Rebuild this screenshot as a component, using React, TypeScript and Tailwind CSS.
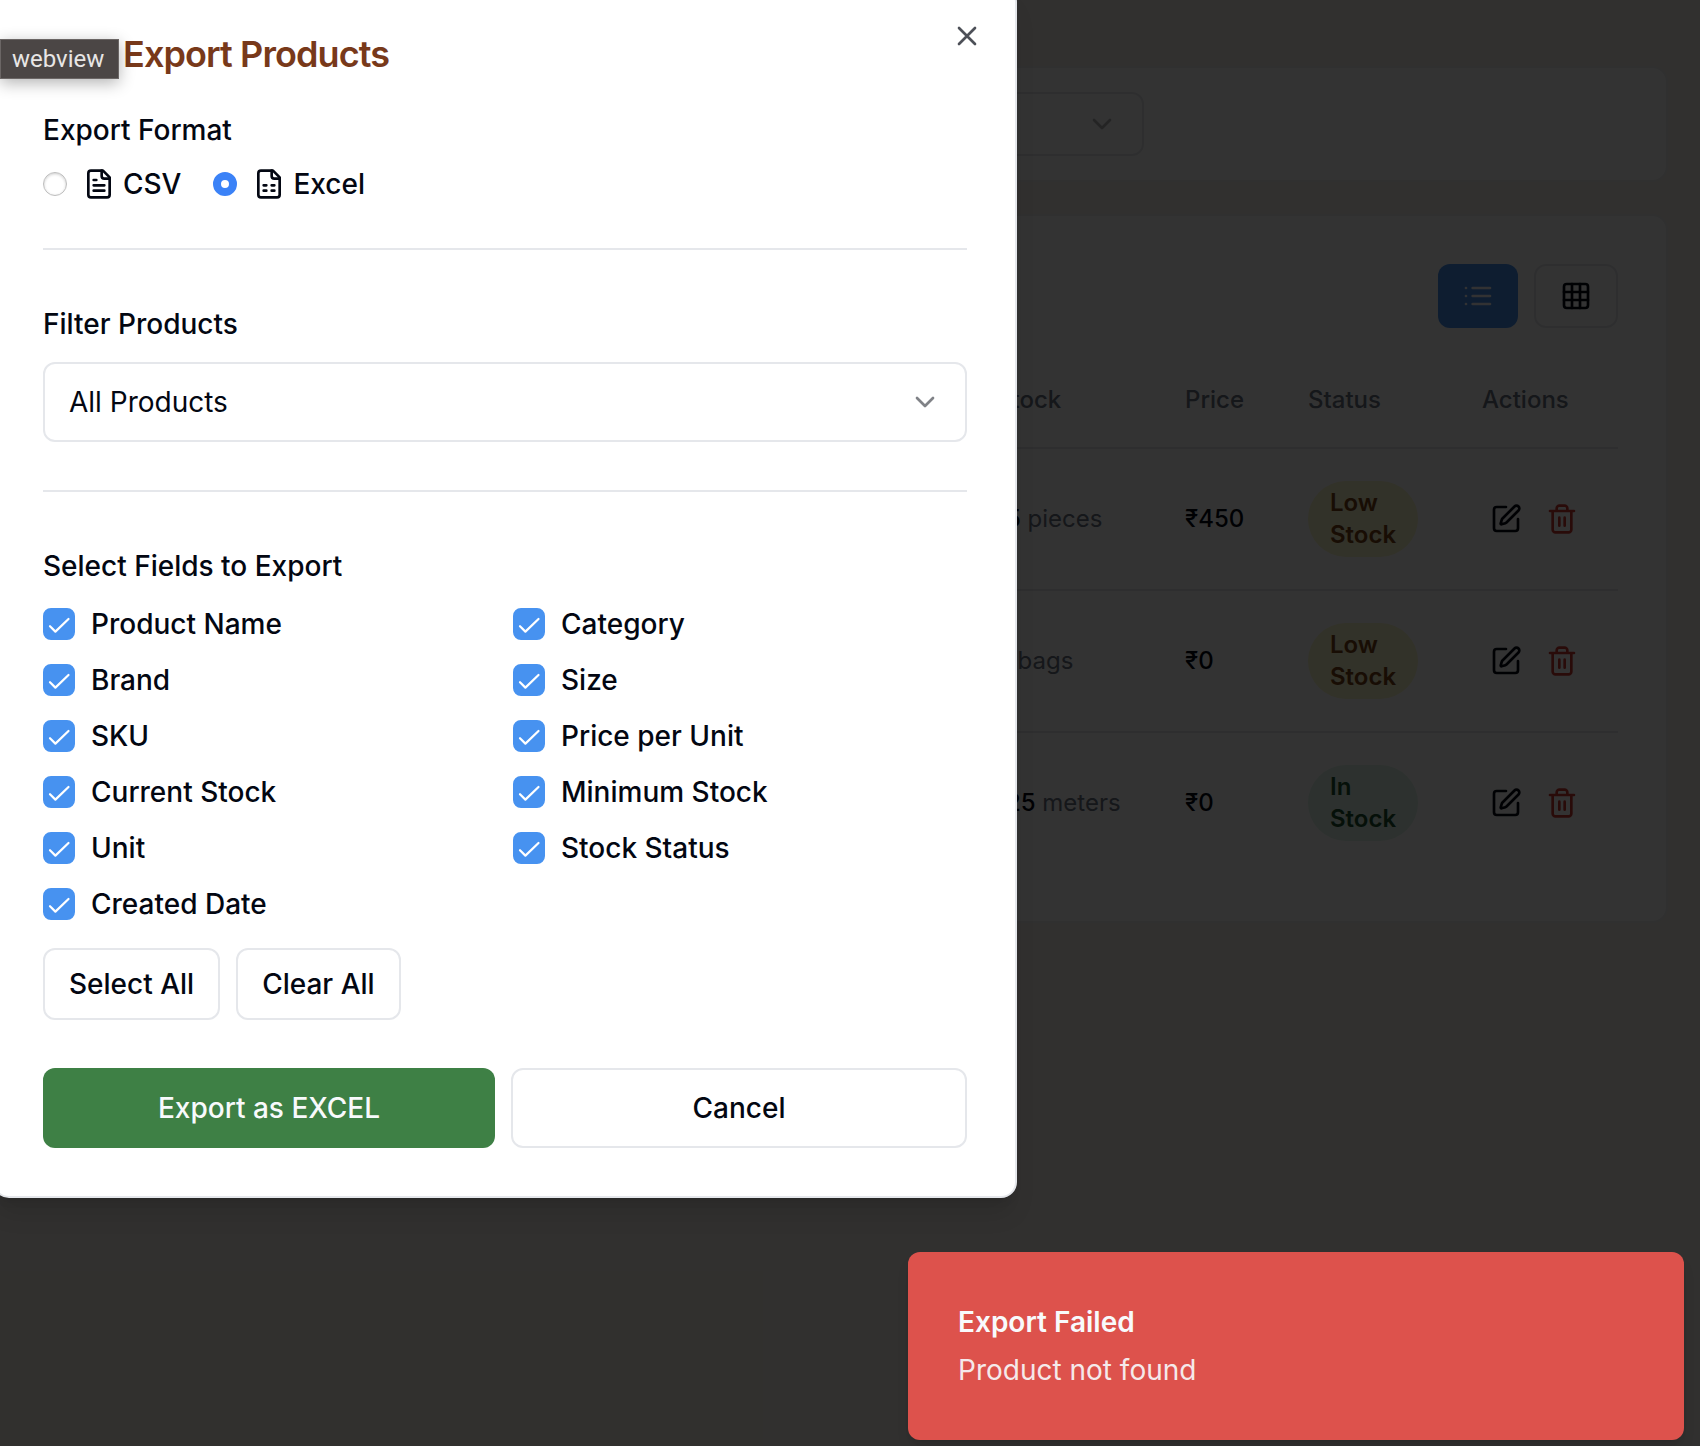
import { useState, type ReactNode } from "react";

const fields = [
  "Product Name",
  "Category",
  "Brand",
  "Size",
  "SKU",
  "Price per Unit",
  "Current Stock",
  "Minimum Stock",
  "Unit",
  "Stock Status",
  "Created Date",
];

const rows = [
  { amount: "15", unit: "pieces", price: "₹450", status: "Low Stock" },
  { amount: "5", unit: "bags", price: "₹0", status: "Low Stock" },
  { amount: "125", unit: "meters", price: "₹0", status: "In Stock" },
];

function Icon({ children, className = "" }: { children: ReactNode; className?: string }) {
  return (
    <svg
      viewBox="0 0 24 24"
      fill="none"
      stroke="currentColor"
      strokeWidth="2"
      strokeLinecap="round"
      strokeLinejoin="round"
      aria-hidden="true"
      className={`size-8 shrink-0 ${className}`}
    >
      {children}
    </svg>
  );
}

function Chevron({ className }: { className: string }) {
  return (
    <Icon className={`pointer-events-none absolute right-[26px] ${className}`}>
      <path d="m6 9 6 6 6-6" />
    </Icon>
  );
}

function FormatOption({
  label,
  checked,
  onChange,
  children,
}: {
  label: string;
  checked: boolean;
  onChange: () => void;
  children: ReactNode;
}) {
  return (
    <label className="flex items-center gap-4">
      <input
        type="radio"
        name="format"
        checked={checked}
        onChange={onChange}
        className="size-6 appearance-none rounded-full border border-[#bdbdbd] bg-white shadow-[inset_0_1px_3px_rgba(0,0,0,0.2)] checked:border-[8px] checked:border-[#3b82f7] checked:shadow-none"
      />
      <span className="flex items-center gap-2">
        <Icon>
          <path d="M15 2H6a2 2 0 0 0-2 2v16a2 2 0 0 0 2 2h12a2 2 0 0 0 2-2V7Z" />
          <path d="M14 2v4a2 2 0 0 0 2 2h4" />
          {children}
        </Icon>
        {label}
      </span>
    </label>
  );
}

function ProductsPage() {
  return (
    <main className="flex min-h-screen flex-col gap-8 bg-[#f5f0e8] px-8 pt-[66px]">
      <section className="rounded-2xl border-2 border-gray-200/70 bg-white p-6">
        <div className="relative ml-auto mr-[498px] flex w-[400px] items-center">
          <select
            aria-label="Category"
            className="h-16 w-full appearance-none rounded-xl border-2 border-gray-200 bg-white px-6"
          />
          <Chevron className="opacity-30" />
        </div>
      </section>
      <section className="flex flex-col gap-6 rounded-2xl border-2 border-gray-200/70 bg-white p-12">
        <div className="flex justify-end gap-4">
          <button
            aria-label="List view"
            className="flex h-16 items-center rounded-xl bg-[#4792f0] px-6 text-slate-50"
          >
            <Icon>
              <path d="M8 6h13M8 12h13M8 18h13M3 6h.01M3 12h.01M3 18h.01" />
            </Icon>
          </button>
          <button
            aria-label="Grid view"
            className="flex h-16 items-center rounded-xl border-2 border-gray-200 bg-white px-6"
          >
            <Icon>
              <rect width="18" height="18" x="3" y="3" rx="2" />
              <path d="M3 9h18M3 15h18M9 3v18M15 3v18" />
            </Icon>
          </button>
        </div>
        <table className="w-full table-fixed text-left text-2xl">
          <colgroup>
            <col />
            <col className="w-[189px]" />
            <col className="w-[123px]" />
            <col className="w-[174px]" />
            <col className="w-[168px]" />
          </colgroup>
          <thead>
            <tr className="border-b-2 border-gray-200 text-gray-500">
              <td />
              <th className="h-24 px-8 font-medium">Stock</th>
              <th className="px-8 font-medium">Price</th>
              <th className="px-8 font-medium">Status</th>
              <th className="px-8 font-medium">Actions</th>
            </tr>
          </thead>
          <tbody>
            {rows.map((row) => (
              <tr key={row.unit} className="border-b-2 border-gray-200 last:border-0">
                <td />
                <td className="whitespace-nowrap px-8">
                  <span className="font-medium">{row.amount}</span>{" "}
                  <span className="text-gray-500">{row.unit}</span>
                </td>
                <td className="px-8 font-medium">{row.price}</td>
                <td className="p-8">
                  <div
                    className={
                      row.status === "In Stock"
                        ? "rounded-full border-2 border-transparent bg-[#dff6e9] px-5 py-1 font-semibold text-[#1d5230]"
                        : "rounded-full border-2 border-transparent bg-[#fbf7cb] px-5 py-1 font-semibold text-[#774416]"
                    }
                  >
                    {row.status}
                  </div>
                </td>
                <td className="px-8">
                  <div className="flex gap-2">
                    <button aria-label="Edit" className="p-2">
                      <Icon>
                        <path d="M12 3H5a2 2 0 0 0-2 2v14a2 2 0 0 0 2 2h14a2 2 0 0 0 2-2v-7" />
                        <path d="M18.375 2.625a1 1 0 0 1 3 3l-9.013 9.014a2 2 0 0 1-.853.505l-2.873.84a.5.5 0 0 1-.62-.62l.84-2.873a2 2 0 0 1 .506-.852z" />
                      </Icon>
                    </button>
                    <button aria-label="Delete" className="p-2 text-[#cb3a31]">
                      <Icon>
                        <path d="M3 6h18M19 6v14c0 1-1 2-2 2H7c-1 0-2-1-2-2V6M8 6V4c0-1 1-2 2-2h4c1 0 2 1 2 2v2M10 11v6M14 11v6" />
                      </Icon>
                    </button>
                  </div>
                </td>
              </tr>
            ))}
          </tbody>
        </table>
      </section>
    </main>
  );
}

export default function App() {
  const [format, setFormat] = useState("Excel");
  const [selected, setSelected] = useState<string[]>(fields);

  const toggle = (field: string) =>
    setSelected((current) =>
      current.includes(field) ? current.filter((f) => f !== field) : [...current, field],
    );

  return (
    <div className="relative min-h-screen overflow-hidden font-['Inter',sans-serif] text-[28px] leading-10 text-gray-950">
      <ProductsPage />
      <div className="absolute inset-0 bg-black/80" />

      <div
        role="dialog"
        aria-labelledby="dialog-title"
        className="absolute -left-[7px] -top-[14px] flex w-[1024px] flex-col rounded-2xl border-2 border-gray-200 bg-white p-12 font-medium shadow-xl"
      >
        <h2
          id="dialog-title"
          className="pl-20 text-4xl/9 font-semibold tracking-tight text-[#78391a]"
        >
          Export Products
        </h2>
        <button aria-label="Close" className="absolute right-8 top-8 opacity-70">
          <Icon>
            <path d="M18 6 6 18M6 6l12 12" />
          </Icon>
        </button>

        <fieldset className="mt-10">
          <legend className="leading-9">Export Format</legend>
          <div className="mt-4 flex gap-8">
            <FormatOption label="CSV" checked={format === "CSV"} onChange={() => setFormat("CSV")}>
              <path d="M10 9H8M16 13H8M16 17H8" />
            </FormatOption>
            <FormatOption
              label="Excel"
              checked={format === "Excel"}
              onChange={() => setFormat("Excel")}
            >
              <path d="M8 13h2M14 13h2M8 17h2M14 17h2" />
            </FormatOption>
          </div>
        </fieldset>

        <hr className="mt-11 border-t-2 border-gray-200" />

        <label htmlFor="filter" className="mt-14 leading-9">
          Filter Products
        </label>
        <div className="relative mt-5 flex items-center">
          <select
            id="filter"
            className="h-20 w-full appearance-none rounded-xl border-2 border-gray-200 bg-white px-6 font-normal"
          >
            <option>All Products</option>
          </select>
          <Chevron className="opacity-50" />
        </div>

        <hr className="mt-12 border-t-2 border-gray-200" />

        <fieldset className="mt-14">
          <legend className="leading-9">Select Fields to Export</legend>
          <div className="mt-5 grid grid-cols-2 gap-x-4 gap-y-4">
            {fields.map((field) => (
              <label key={field} className="flex items-center gap-4">
                <span className="relative flex size-8">
                  <input
                    type="checkbox"
                    checked={selected.includes(field)}
                    onChange={() => toggle(field)}
                    className="peer size-8 appearance-none rounded-lg border-2 border-[#4792f0] bg-white checked:bg-[#4792f0]"
                  />
                  <svg
                    viewBox="0 0 32 32"
                    fill="none"
                    stroke="white"
                    strokeWidth="2.2"
                    strokeLinecap="round"
                    strokeLinejoin="round"
                    aria-hidden="true"
                    className="pointer-events-none absolute inset-0 hidden size-8 peer-checked:block"
                  >
                    <path d="m7 18.2 5.4 5.4L25.5 11" />
                  </svg>
                </span>
                {field}
              </label>
            ))}
          </div>
        </fieldset>

        <div className="mt-6 flex gap-4">
          <button
            onClick={() => setSelected(fields)}
            className="h-[72px] rounded-xl border-2 border-gray-200 px-6"
          >
            Select All
          </button>
          <button
            onClick={() => setSelected([])}
            className="h-[72px] rounded-xl border-2 border-gray-200 px-6"
          >
            Clear All
          </button>
        </div>

        <div className="mt-12 flex gap-4">
          <button className="h-20 flex-1 rounded-xl bg-[#3e8045] px-8 text-slate-50">
            Export as {format.toUpperCase()}
          </button>
          <button className="h-20 flex-1 rounded-xl border-2 border-gray-200 px-8">Cancel</button>
        </div>
      </div>

      <div
        role="tooltip"
        className="absolute left-0 top-[39px] border border-[#6b6665] bg-[#4b4645] pl-[11px] pr-3.5 font-['Roboto',sans-serif] text-2xl/[38px] text-[#e8e6e5] shadow-[0_4px_16px_rgba(0,0,0,0.3)]"
      >
        webview
      </div>

      <div
        role="alert"
        className="absolute bottom-[6px] right-4 flex w-[776px] flex-col gap-2 rounded-xl bg-[#dd524c] p-[50px] text-slate-50 shadow-lg"
      >
        <strong className="font-semibold">Export Failed</strong>
        <p className="opacity-90">Product not found</p>
      </div>
    </div>
  );
}
